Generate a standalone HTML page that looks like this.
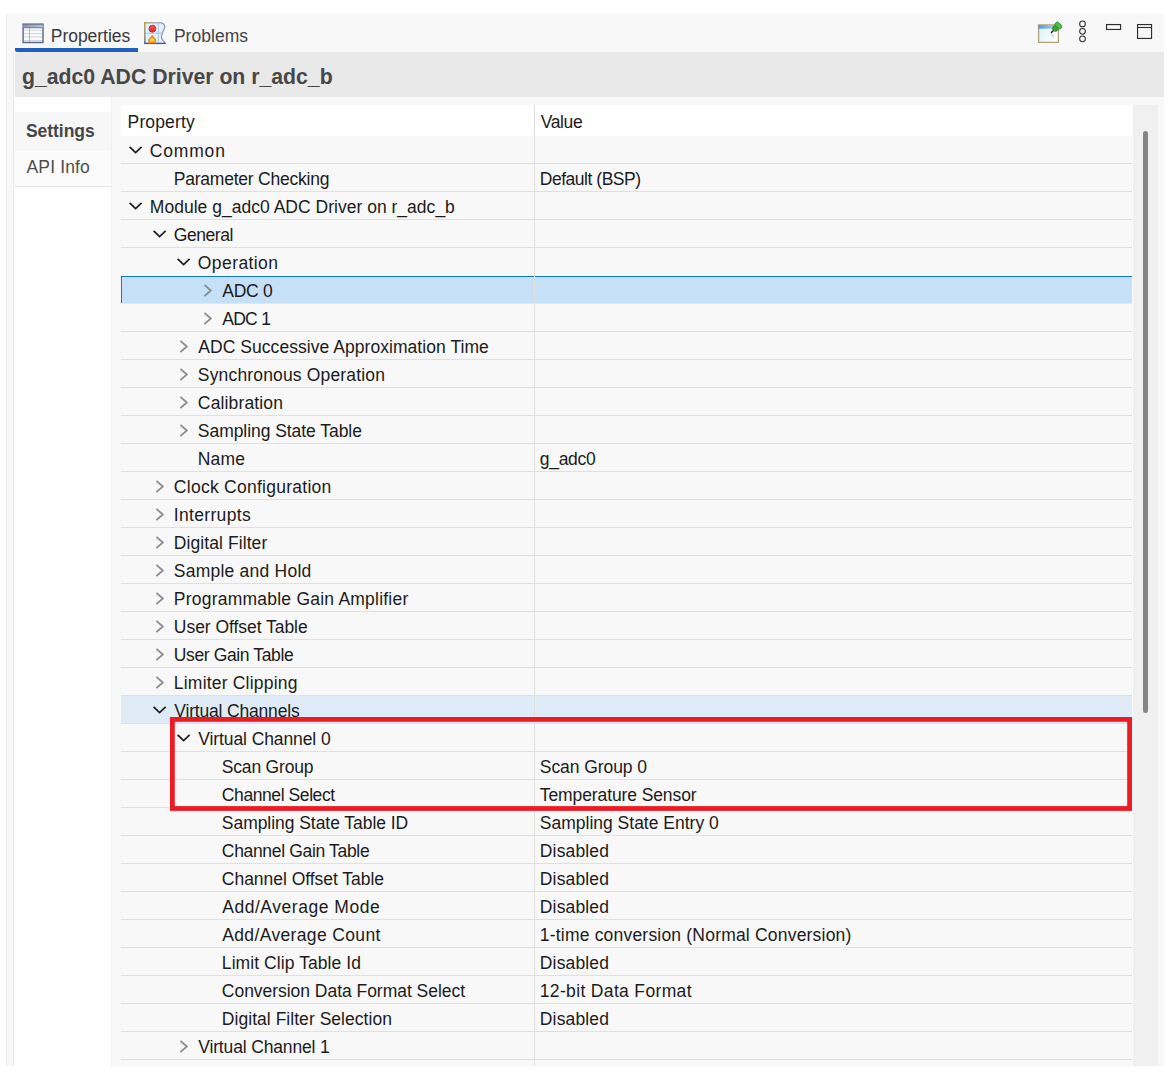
<!DOCTYPE html>
<html><head><meta charset="utf-8"><title>Properties</title>
<style>
html,body{margin:0;padding:0;background:#fff;}
body{width:1169px;height:1074px;position:relative;overflow:hidden;font-family:"Liberation Sans",sans-serif;font-size:17.5px;color:#1b1b1b;}
.a{position:absolute;}
.t{position:absolute;white-space:nowrap;line-height:20px;height:20px;}
.ln{position:absolute;left:121px;width:1011px;height:1px;background:#e0e0e0;}
svg{position:absolute;overflow:visible;}
</style></head><body>

<div class="a" style="left:6px;top:14px;width:1158px;height:1052px;background:#f8f8f8"></div>
<div class="a" style="left:6px;top:14px;width:1px;height:1052px;background:#e9e9e9"></div>
<div class="a" style="left:13px;top:52px;width:1px;height:1014px;background:#e9e9e9"></div>
<div class="a" style="left:14px;top:52px;width:1px;height:1014px;background:#fbfbfb"></div>
<div class="a" style="left:15px;top:52px;width:1149px;height:45px;background:#e9e9e9"></div>
<div class="a" style="left:15px;top:48px;width:123px;height:4px;background:#1f5fbf;border-radius:0 0 0 2px"></div>
<div class="a" style="left:15px;top:97px;width:96px;height:969px;background:#fff"></div>
<div class="a" style="left:15px;top:112px;width:96px;height:39px;background:#f7f7f7"></div>
<div class="a" style="left:15px;top:151px;width:96px;height:35px;background:#fbfbfb"></div>
<div class="a" style="left:15px;top:186px;width:96px;height:1px;background:#e6e6e6"></div>
<div class="a" style="left:111px;top:97px;width:1px;height:969px;background:#f1f1f1"></div>
<div class="a" style="left:121px;top:105px;width:1011px;height:31px;background:#fff"></div>
<div class="a" style="left:1132px;top:105px;width:1px;height:961px;background:#fdfdfd"></div>
<div class="a" style="left:1133px;top:105px;width:25px;height:961px;background:#f0f0f0"></div>
<div class="a" style="left:1143px;top:131px;width:5px;height:582px;background:#858585;border-radius:2.5px"></div>
<div class="a" style="left:121px;top:276px;width:1011px;height:27px;background:#c5e0f7"></div>
<div class="a" style="left:121px;top:276px;width:1011px;height:1px;background:#0a78d4"></div>
<div class="a" style="left:121px;top:276px;width:1px;height:27px;background:#0a78d4"></div>
<div class="a" style="left:121px;top:696px;width:1011px;height:27px;background:#dfecf8"></div>
<div class="ln" style="top:163px"></div>
<div class="ln" style="top:191px"></div>
<div class="ln" style="top:219px"></div>
<div class="ln" style="top:247px"></div>
<div class="ln" style="top:303px;background:#e8e5e3"></div>
<div class="ln" style="top:331px"></div>
<div class="ln" style="top:359px"></div>
<div class="ln" style="top:387px"></div>
<div class="ln" style="top:415px"></div>
<div class="ln" style="top:443px"></div>
<div class="ln" style="top:471px"></div>
<div class="ln" style="top:499px"></div>
<div class="ln" style="top:527px"></div>
<div class="ln" style="top:555px"></div>
<div class="ln" style="top:583px"></div>
<div class="ln" style="top:611px"></div>
<div class="ln" style="top:639px"></div>
<div class="ln" style="top:667px"></div>
<div class="ln" style="top:695px"></div>
<div class="ln" style="top:723px"></div>
<div class="ln" style="top:751px"></div>
<div class="ln" style="top:779px"></div>
<div class="ln" style="top:807px"></div>
<div class="ln" style="top:835px"></div>
<div class="ln" style="top:863px"></div>
<div class="ln" style="top:891px"></div>
<div class="ln" style="top:919px"></div>
<div class="ln" style="top:947px"></div>
<div class="ln" style="top:975px"></div>
<div class="ln" style="top:1003px"></div>
<div class="ln" style="top:1031px"></div>
<div class="ln" style="top:1059px"></div>
<div class="a" style="left:534px;top:105px;width:1px;height:961px;background:#e0e0e0"></div>
<div class="t" style="left:127.6px;top:111.54px;letter-spacing:0.14px;">Property</div>
<div class="t" style="left:540.7px;top:111.54px;letter-spacing:-0.367px;">Value</div>
<div class="t" style="left:149.85px;top:141.44px;letter-spacing:0.808px;">Common</div>
<svg style="left:127px;top:142px" width="18" height="18" viewBox="0 0 18 18"><g transform="translate(8.60 8.15)"><path d="M-5.4 -2.7 L0 2.5 L5.4 -2.7" fill="none" stroke="#1e1e1e" stroke-width="1.7" stroke-linecap="square"/></g></svg>
<div class="t" style="left:173.85px;top:169.44px;letter-spacing:-0.2346px;">Parameter Checking</div>
<div class="t" style="left:539.8px;top:169.44px;letter-spacing:-0.475px;">Default (BSP)</div>
<div class="t" style="left:149.85px;top:197.44px;letter-spacing:0.0159px;">Module g_adc0 ADC Driver on r_adc_b</div>
<svg style="left:127px;top:198px" width="18" height="18" viewBox="0 0 18 18"><g transform="translate(8.60 8.15)"><path d="M-5.4 -2.7 L0 2.5 L5.4 -2.7" fill="none" stroke="#1e1e1e" stroke-width="1.7" stroke-linecap="square"/></g></svg>
<div class="t" style="left:173.85px;top:225.44px;letter-spacing:-0.461px;">General</div>
<svg style="left:151px;top:226px" width="18" height="18" viewBox="0 0 18 18"><g transform="translate(8.60 8.15)"><path d="M-5.4 -2.7 L0 2.5 L5.4 -2.7" fill="none" stroke="#1e1e1e" stroke-width="1.7" stroke-linecap="square"/></g></svg>
<div class="t" style="left:197.85px;top:253.44px;letter-spacing:0.4105px;">Operation</div>
<svg style="left:175px;top:254px" width="18" height="18" viewBox="0 0 18 18"><g transform="translate(8.60 8.15)"><path d="M-5.4 -2.7 L0 2.5 L5.4 -2.7" fill="none" stroke="#1e1e1e" stroke-width="1.7" stroke-linecap="square"/></g></svg>
<div class="t" style="left:222.25px;top:281.44px;letter-spacing:-0.267px;">ADC 0</div>
<svg style="left:199px;top:282px" width="18" height="18" viewBox="0 0 18 18"><g transform="translate(8.95 8.50)"><path d="M-2.9 -5.0 L2.9 0 L-2.9 5.0" fill="none" stroke="#8a8a8a" stroke-width="1.7" stroke-linecap="square"/></g></svg>
<div class="t" style="left:222.25px;top:309.44px;letter-spacing:-0.727px;">ADC 1</div>
<svg style="left:199px;top:310px" width="18" height="18" viewBox="0 0 18 18"><g transform="translate(8.95 8.50)"><path d="M-2.9 -5.0 L2.9 0 L-2.9 5.0" fill="none" stroke="#8a8a8a" stroke-width="1.7" stroke-linecap="square"/></g></svg>
<div class="t" style="left:198.25px;top:337.44px;letter-spacing:0.0519px;">ADC Successive Approximation Time</div>
<svg style="left:175px;top:338px" width="18" height="18" viewBox="0 0 18 18"><g transform="translate(8.95 8.50)"><path d="M-2.9 -5.0 L2.9 0 L-2.9 5.0" fill="none" stroke="#8a8a8a" stroke-width="1.7" stroke-linecap="square"/></g></svg>
<div class="t" style="left:197.85px;top:365.44px;letter-spacing:0.163px;">Synchronous Operation</div>
<svg style="left:175px;top:366px" width="18" height="18" viewBox="0 0 18 18"><g transform="translate(8.95 8.50)"><path d="M-2.9 -5.0 L2.9 0 L-2.9 5.0" fill="none" stroke="#8a8a8a" stroke-width="1.7" stroke-linecap="square"/></g></svg>
<div class="t" style="left:197.85px;top:393.44px;letter-spacing:0.148px;">Calibration</div>
<svg style="left:175px;top:394px" width="18" height="18" viewBox="0 0 18 18"><g transform="translate(8.95 8.50)"><path d="M-2.9 -5.0 L2.9 0 L-2.9 5.0" fill="none" stroke="#8a8a8a" stroke-width="1.7" stroke-linecap="square"/></g></svg>
<div class="t" style="left:197.85px;top:421.44px;letter-spacing:-0.0522px;">Sampling State Table</div>
<svg style="left:175px;top:422px" width="18" height="18" viewBox="0 0 18 18"><g transform="translate(8.95 8.50)"><path d="M-2.9 -5.0 L2.9 0 L-2.9 5.0" fill="none" stroke="#8a8a8a" stroke-width="1.7" stroke-linecap="square"/></g></svg>
<div class="t" style="left:197.85px;top:449.44px;letter-spacing:0.131px;">Name</div>
<div class="t" style="left:539.8px;top:449.44px;letter-spacing:-0.292px;">g_adc0</div>
<div class="t" style="left:173.85px;top:477.44px;letter-spacing:0.262px;">Clock Configuration</div>
<svg style="left:151px;top:478px" width="18" height="18" viewBox="0 0 18 18"><g transform="translate(8.95 8.50)"><path d="M-2.9 -5.0 L2.9 0 L-2.9 5.0" fill="none" stroke="#8a8a8a" stroke-width="1.7" stroke-linecap="square"/></g></svg>
<div class="t" style="left:173.85px;top:505.44px;letter-spacing:0.3223px;">Interrupts</div>
<svg style="left:151px;top:506px" width="18" height="18" viewBox="0 0 18 18"><g transform="translate(8.95 8.50)"><path d="M-2.9 -5.0 L2.9 0 L-2.9 5.0" fill="none" stroke="#8a8a8a" stroke-width="1.7" stroke-linecap="square"/></g></svg>
<div class="t" style="left:173.85px;top:533.44px;letter-spacing:0.0793px;">Digital Filter</div>
<svg style="left:151px;top:534px" width="18" height="18" viewBox="0 0 18 18"><g transform="translate(8.95 8.50)"><path d="M-2.9 -5.0 L2.9 0 L-2.9 5.0" fill="none" stroke="#8a8a8a" stroke-width="1.7" stroke-linecap="square"/></g></svg>
<div class="t" style="left:173.85px;top:561.44px;letter-spacing:0.2237px;">Sample and Hold</div>
<svg style="left:151px;top:562px" width="18" height="18" viewBox="0 0 18 18"><g transform="translate(8.95 8.50)"><path d="M-2.9 -5.0 L2.9 0 L-2.9 5.0" fill="none" stroke="#8a8a8a" stroke-width="1.7" stroke-linecap="square"/></g></svg>
<div class="t" style="left:173.85px;top:589.44px;letter-spacing:0.2252px;">Programmable Gain Amplifier</div>
<svg style="left:151px;top:590px" width="18" height="18" viewBox="0 0 18 18"><g transform="translate(8.95 8.50)"><path d="M-2.9 -5.0 L2.9 0 L-2.9 5.0" fill="none" stroke="#8a8a8a" stroke-width="1.7" stroke-linecap="square"/></g></svg>
<div class="t" style="left:173.85px;top:617.44px;letter-spacing:-0.0455px;">User Offset Table</div>
<svg style="left:151px;top:618px" width="18" height="18" viewBox="0 0 18 18"><g transform="translate(8.95 8.50)"><path d="M-2.9 -5.0 L2.9 0 L-2.9 5.0" fill="none" stroke="#8a8a8a" stroke-width="1.7" stroke-linecap="square"/></g></svg>
<div class="t" style="left:173.85px;top:645.44px;letter-spacing:-0.381px;">User Gain Table</div>
<svg style="left:151px;top:646px" width="18" height="18" viewBox="0 0 18 18"><g transform="translate(8.95 8.50)"><path d="M-2.9 -5.0 L2.9 0 L-2.9 5.0" fill="none" stroke="#8a8a8a" stroke-width="1.7" stroke-linecap="square"/></g></svg>
<div class="t" style="left:173.85px;top:673.44px;letter-spacing:0.195px;">Limiter Clipping</div>
<svg style="left:151px;top:674px" width="18" height="18" viewBox="0 0 18 18"><g transform="translate(8.95 8.50)"><path d="M-2.9 -5.0 L2.9 0 L-2.9 5.0" fill="none" stroke="#8a8a8a" stroke-width="1.7" stroke-linecap="square"/></g></svg>
<div class="t" style="left:174.25px;top:701.44px;letter-spacing:-0.178px;">Virtual Channels</div>
<svg style="left:151px;top:702px" width="18" height="18" viewBox="0 0 18 18"><g transform="translate(8.60 8.15)"><path d="M-5.4 -2.7 L0 2.5 L5.4 -2.7" fill="none" stroke="#1e1e1e" stroke-width="1.7" stroke-linecap="square"/></g></svg>
<div class="t" style="left:198.25px;top:729.44px;letter-spacing:-0.095px;">Virtual Channel 0</div>
<svg style="left:175px;top:730px" width="18" height="18" viewBox="0 0 18 18"><g transform="translate(8.60 8.15)"><path d="M-5.4 -2.7 L0 2.5 L5.4 -2.7" fill="none" stroke="#1e1e1e" stroke-width="1.7" stroke-linecap="square"/></g></svg>
<div class="t" style="left:221.85px;top:757.44px;letter-spacing:-0.199px;">Scan Group</div>
<div class="t" style="left:539.8px;top:757.44px;letter-spacing:-0.0641px;">Scan Group 0</div>
<div class="t" style="left:221.85px;top:785.44px;letter-spacing:-0.416px;">Channel Select</div>
<div class="t" style="left:539.8px;top:785.44px;letter-spacing:-0.1037px;">Temperature Sensor</div>
<div class="t" style="left:221.85px;top:813.44px;letter-spacing:-0.0475px;">Sampling State Table ID</div>
<div class="t" style="left:539.8px;top:813.44px;letter-spacing:-0.0013px;">Sampling State Entry 0</div>
<div class="t" style="left:221.85px;top:841.44px;letter-spacing:-0.3297px;">Channel Gain Table</div>
<div class="t" style="left:539.8px;top:841.44px;letter-spacing:0.1533px;">Disabled</div>
<div class="t" style="left:221.85px;top:869.44px;letter-spacing:-0.0332px;">Channel Offset Table</div>
<div class="t" style="left:539.8px;top:869.44px;letter-spacing:0.1533px;">Disabled</div>
<div class="t" style="left:222.25px;top:897.44px;letter-spacing:0.531px;">Add/Average Mode</div>
<div class="t" style="left:539.8px;top:897.44px;letter-spacing:0.1533px;">Disabled</div>
<div class="t" style="left:222.25px;top:925.44px;letter-spacing:0.354px;">Add/Average Count</div>
<div class="t" style="left:539.8px;top:925.44px;letter-spacing:0.1983px;">1-time conversion (Normal Conversion)</div>
<div class="t" style="left:221.85px;top:953.44px;letter-spacing:0.0733px;">Limit Clip Table Id</div>
<div class="t" style="left:539.8px;top:953.44px;letter-spacing:0.1533px;">Disabled</div>
<div class="t" style="left:221.85px;top:981.44px;letter-spacing:-0.034px;">Conversion Data Format Select</div>
<div class="t" style="left:539.8px;top:981.44px;letter-spacing:0.342px;">12-bit Data Format</div>
<div class="t" style="left:221.85px;top:1009.44px;letter-spacing:0.037px;">Digital Filter Selection</div>
<div class="t" style="left:539.8px;top:1009.44px;letter-spacing:0.1533px;">Disabled</div>
<div class="t" style="left:198.25px;top:1037.44px;letter-spacing:-0.1502px;">Virtual Channel 1</div>
<svg style="left:175px;top:1038px" width="18" height="18" viewBox="0 0 18 18"><g transform="translate(8.95 8.50)"><path d="M-2.9 -5.0 L2.9 0 L-2.9 5.0" fill="none" stroke="#8a8a8a" stroke-width="1.7" stroke-linecap="square"/></g></svg>
<svg style="left:0;top:0" width="1169" height="1074"><rect x="172.4" y="719.4" width="957.2" height="89.1" fill="none" stroke="#ed1c24" stroke-width="4.8"/></svg>
<div class="t" style="left:26.0px;top:121.24px;letter-spacing:-0.05px;font-weight:700;color:#464646;">Settings</div>
<div class="t" style="left:26.5px;top:156.74px;letter-spacing:0.148px;color:#4d4d4d;">API Info</div>
<div class="t" style="left:50.8px;top:26.14px;letter-spacing:-0.0433px;color:#3a3a3a;">Properties</div>
<div class="t" style="left:173.9px;top:26.14px;letter-spacing:0.0309px;color:#444;">Problems</div>
<div class="t" style="left:21.8px;top:66.80px;letter-spacing:0px;font-size:22.5px;font-weight:700;color:#474747;transform:scaleX(0.9434);transform-origin:0 0;">g_adc0 ADC Driver on r_adc_b</div>
<!-- properties icon -->
<svg style="left:20px;top:20px" width="28" height="28" viewBox="20 20 28 28">
<defs>
<linearGradient id="ph" x1="0" y1="0" x2="1" y2="0"><stop offset="0" stop-color="#8c9ab4"/><stop offset="1" stop-color="#bcc8d4"/></linearGradient>
</defs>
<rect x="23.1" y="24.1" width="19.9" height="18.4" fill="#fdfdfe" stroke="#56678c" stroke-width="1.4"/>
<rect x="23.6" y="24.6" width="18.9" height="3.3" fill="url(#ph)"/>
<rect x="23.6" y="24.3" width="18.9" height="0.8" fill="#6a7896"/>
<rect x="23.6" y="27.3" width="18.9" height="0.9" fill="#66759a"/>
<rect x="24" y="29.8" width="18" height="0.9" fill="#cdd3df"/>
<rect x="24" y="33.1" width="18" height="1" fill="#c8cfdc"/>
<rect x="24" y="36.4" width="18" height="1" fill="#c8cfdc"/>
<rect x="24" y="40.2" width="18" height="1.4" fill="#c5ccda"/>
<rect x="29" y="28" width="1" height="14" fill="#aab6c8"/>
</svg>
<!-- problems icon -->
<svg style="left:140px;top:18px" width="30" height="30" viewBox="140 18 30 30">
<defs>
<linearGradient id="pl" x1="0" y1="0" x2="0" y2="1"><stop offset="0" stop-color="#a8932f"/><stop offset="0.5" stop-color="#8c8c66"/><stop offset="1" stop-color="#465c88"/></linearGradient>
<linearGradient id="pt" x1="0" y1="0" x2="1" y2="0"><stop offset="0" stop-color="#a8932f"/><stop offset="0.6" stop-color="#9aa4b4"/><stop offset="1" stop-color="#8796b6"/></linearGradient>
<linearGradient id="rd" x1="0" y1="0" x2="0" y2="1"><stop offset="0" stop-color="#f04a4a"/><stop offset="0.5" stop-color="#ef4545"/><stop offset="0.55" stop-color="#d93a42"/><stop offset="1" stop-color="#d63640"/></linearGradient>
<linearGradient id="yw" x1="0" y1="0" x2="0" y2="1"><stop offset="0" stop-color="#ffe070"/><stop offset="1" stop-color="#fbb829"/></linearGradient>
</defs>
<path d="M144.8 22.8 L161.2 22.8 C164.2 23.2 165.4 25.6 164.3 28.6 C163.2 31.8 160.6 35.4 161.6 38 C162.4 40.2 164.2 42 165.6 43.5 L144.8 43.5 Z" fill="#e2f2fc"/>
<path d="M161.2 22.8 C164.2 23.2 165.4 25.6 164.3 28.6 C163.2 31.8 160.6 35.4 161.6 38 C162.4 40.2 164.2 42 165.6 43.5" fill="none" stroke="#8595b5" stroke-width="1.2"/>
<rect x="145.4" y="32.7" width="17" height="1" fill="#adc4ea"/>
<rect x="157.8" y="23.4" width="1" height="19.6" fill="#adc4ea"/>
<rect x="144.2" y="22.2" width="1.3" height="21.6" fill="url(#pl)"/>
<rect x="144.2" y="22.2" width="17.4" height="1.2" fill="url(#pt)"/>
<path d="M144.2 43.4 L165.8 43.4" stroke="#465c88" stroke-width="1.4"/>
<circle cx="152.4" cy="28.75" r="3.45" fill="url(#rd)" stroke="#d4202a" stroke-width="0.9"/>
<path d="M149 42.6 L149 39.8 L152.2 35.9 L155.4 39.8 L155.4 42.6 Z" fill="url(#yw)" stroke="#e8901e" stroke-width="1.5" stroke-linejoin="round"/>
</svg>
<!-- pin icon -->
<svg style="left:1030px;top:14px" width="40" height="40" viewBox="1030 14 40 40">
<defs>
<linearGradient id="wt" x1="0" y1="0" x2="1" y2="0"><stop offset="0" stop-color="#5596e0"/><stop offset="0.5" stop-color="#8db8ea"/><stop offset="1" stop-color="#c4d6f2"/></linearGradient>
<linearGradient id="wb" x1="0" y1="0" x2="1" y2="0.4"><stop offset="0" stop-color="#d4effc"/><stop offset="0.7" stop-color="#f4fbff"/><stop offset="1" stop-color="#ffffff"/></linearGradient>
<linearGradient id="gp" x1="0" y1="0" x2="1" y2="1"><stop offset="0" stop-color="#2c9a34"/><stop offset="0.5" stop-color="#5ab03c"/><stop offset="1" stop-color="#1d8c30"/></linearGradient>
</defs>
<rect x="1038.6" y="25" width="19.8" height="17.4" fill="url(#wb)" stroke="#b2a27c" stroke-width="1.3"/>
<rect x="1038.4" y="24.9" width="20.2" height="3.8" fill="url(#wt)"/>
<rect x="1038.2" y="24.3" width="20.6" height="0.8" fill="#c0b490"/>
<ellipse cx="1052.4" cy="35.4" rx="1.2" ry="2" fill="#a8c8dc" opacity="0.55" transform="rotate(-40 1052.4 35.4)"/>
<path d="M1053.4 30.5 L1051.4 32.5" stroke="#111" stroke-width="1.3" stroke-linecap="round"/>
<g transform="translate(1053.4 30.4) rotate(-45)">
<rect x="0.2" y="-2.9" width="5.4" height="5.8" rx="2.3" fill="#3f9f32" stroke="#1d8c30" stroke-width="0.8"/>
<rect x="4.9" y="-3.7" width="4.4" height="7.4" rx="2.1" fill="#5db840" stroke="#1f9433" stroke-width="0.9"/>
</g></svg>
<!-- view menu -->
<svg style="left:1070px;top:14px" width="90" height="40" viewBox="1070 14 90 40">
<g fill="none" stroke="#2e2e2e" stroke-width="1.05">
<circle cx="1082.5" cy="23.9" r="2.85"/><circle cx="1082.5" cy="31.35" r="2.85"/><circle cx="1082.5" cy="38.8" r="2.85"/>
<rect x="1106.55" y="24.55" width="14" height="4.9" stroke-width="1.15"/>
<rect x="1137.55" y="24.55" width="14" height="13.9" stroke-width="1.15"/>
<path d="M1137.5 27.5 L1151.5 27.5" stroke-width="1.1"/>
</g>
</svg>

</body></html>
